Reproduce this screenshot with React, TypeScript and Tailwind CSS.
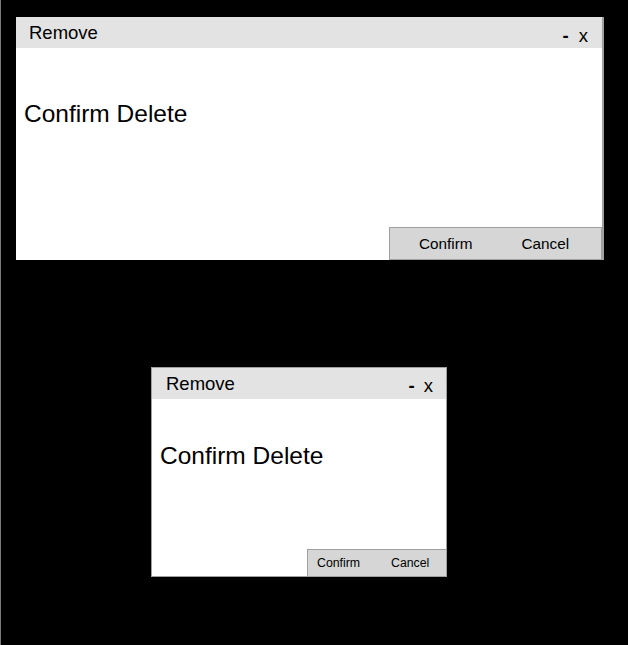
function Dialog({ big }: { big: boolean }) {
  return (
    <div
      className={
        big
          ? "flex flex-col w-[588px] h-[243px] bg-white border-r-2 border-[#a0a0a0]"
          : "flex flex-col w-[296px] h-[210px] bg-white border border-[#a0a0a0]"
      }
    >
      <div className="flex justify-between h-[31px] bg-[#e3e3e3] text-[18.5px] leading-[20px] text-black">
        <span className={big ? "pl-[13px] pt-[6px]" : "pl-[14px] pt-[6px]"}>Remove</span>
        <span className={big ? "flex gap-[10px] pr-[14px] pt-[9px]" : "flex gap-[9px] pr-[13px] pt-[8px]"}>
          <span className="font-bold">-</span>
          <span>x</span>
        </span>
      </div>
      <div className={big ? "pl-[8px] pt-[52px] text-[24.5px] leading-[28px]" : "pl-[8px] pt-[43px] text-[24.5px] leading-[28px]"}>
        Confirm Delete
      </div>
      <div
        className={
          big
            ? "mt-auto ml-auto flex items-center w-[213px] h-[33px] pl-[29px] pt-[2px] gap-[49px] bg-[#d6d6d6] border border-[#a0a0a0] text-[15.3px]"
            : "mt-auto ml-auto flex items-center w-[139px] h-[27px] pl-[9px] gap-[31px] bg-[#d6d6d6] border-t border-l border-[#a0a0a0] text-[12.3px]"
        }
      >
        <span>Confirm</span>
        <span>Cancel</span>
      </div>
    </div>
  );
}

export default function App() {
  return (
    <div
      className="w-[628px] h-[645px] bg-black border-l border-[#7a7a7a] pl-[15px] pt-[17px] text-black"
      style={{ fontFamily: '"Liberation Sans", Arial, sans-serif' }}
    >
      <Dialog big />
      <div className="ml-[135px] mt-[107px]">
        <Dialog big={false} />
      </div>
    </div>
  );
}
